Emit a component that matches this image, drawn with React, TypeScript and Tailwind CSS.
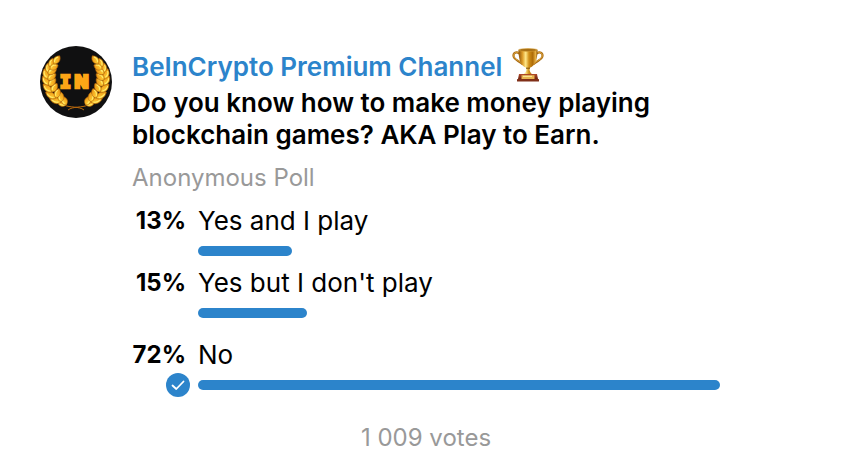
type PollOption = {
  label: string;
  percent: number;
  chosen?: boolean;
};

const OPTIONS: PollOption[] = [
  { label: 'Yes and I play', percent: 13 },
  { label: "Yes but I don't play", percent: 15 },
  { label: 'No', percent: 72, chosen: true },
];

// The leading option fills the whole track, the others scale against it.
const MAX_PERCENT = Math.max(...OPTIONS.map((o) => o.percent));

// Leaves of the left laurel branch, bottom to top: x, y, angle, length
const LEAVES: [number, number, number, number][] = [
  [27, 58, 190, 10], [26, 59, 250, 9],
  [21, 56, 198, 12], [21, 56, 270, 10],
  [16, 52, 210, 12], [16, 52, 288, 10],
  [12, 46, 222, 12], [12, 46, 300, 10],
  [9, 39, 235, 11], [9, 40, 312, 10],
  [8, 33, 250, 11], [8, 34, 322, 10],
  [9, 27, 264, 10], [8, 28, 328, 10],
  [11, 22, 280, 10], [10, 23, 334, 9],
  [14, 18, 305, 10],
];

function Branch() {
  return (
    <g>
      <path d="M44 64C39 60 30 62 24 59C14 54 8 44 8 34C8 26 12 18 19 13" fill="none" stroke="#b9690d" strokeWidth="1" />
      {LEAVES.map(([x, y, angle, length], i) => (
        <g key={i} transform={`translate(${x} ${y}) rotate(${angle}) scale(${length / 10} 1.2)`}>
          <path d="M0 0C2 -3.6 7 -3.6 10 0C7 3.4 2 3 0 0Z" fill="url(#gold)" stroke="#a85b08" strokeWidth="0.5" />
          <path d="M2 -0.7C4 -1.8 6 -1.8 8 -0.6" fill="none" stroke="#ffed70" strokeWidth="0.9" />
        </g>
      ))}
    </g>
  );
}

function Avatar() {
  return (
    <svg viewBox="0 0 72 72" className="size-18 shrink-0" role="img" aria-label="BeInCrypto">
      <defs>
        <linearGradient id="gold" x1="0" y1="0" x2="1" y2="1">
          <stop offset="0" stopColor="#ffdc3f" />
          <stop offset="0.55" stopColor="#f8b325" />
          <stop offset="1" stopColor="#d9830d" />
        </linearGradient>
      </defs>
      <circle cx="36" cy="36" r="36" fill="#101011" />
      <Branch />
      <g transform="translate(72 0) scale(-1 1)">
        <Branch />
      </g>
      <g fill="#fda516" stroke="#fda516" strokeWidth="2.6" fontWeight="700">
        <text x="20" y="42" fontFamily="'DejaVu Sans Mono', monospace" fontSize="18">I</text>
        <text x="34" y="42" fontFamily="'DejaVu Sans', sans-serif" fontSize="18">N</text>
      </g>
    </svg>
  );
}

function Trophy() {
  return (
    <svg viewBox="0 0 32 34" className="mt-0.5 h-[34px] w-8 shrink-0" role="img" aria-label="Trophy">
      <defs>
        <linearGradient id="cup" x1="0" x2="1">
          <stop offset="0" stopColor="#8d5207" />
          <stop offset="0.22" stopColor="#e0a02c" />
          <stop offset="0.38" stopColor="#ffe88a" />
          <stop offset="0.55" stopColor="#d18f17" />
          <stop offset="0.75" stopColor="#ad6b09" />
          <stop offset="0.9" stopColor="#e7b144" />
          <stop offset="1" stopColor="#8b5106" />
        </linearGradient>
        <linearGradient id="base" x1="0" y1="0" x2="0" y2="1">
          <stop offset="0" stopColor="#b34b2b" />
          <stop offset="1" stopColor="#6f2512" />
        </linearGradient>
      </defs>
      <g fill="none" stroke="#a96b14" strokeWidth="2.2">
        <path d="M7.5 5.5C4 3.2 1.2 4.8 1.5 8C1.9 12 7 12.5 11 16.5" />
        <path d="M24.5 5.5C28 3.2 30.8 4.8 30.5 8C30.1 12 25 12.5 21 16.5" />
      </g>
      <g fill="none" stroke="#e2ab40" strokeWidth="0.9">
        <path d="M7.5 5.2C4 3 1.5 4.8 1.8 8C2.2 11.6 7 12.2 11 16" />
        <path d="M24.5 5.2C28 3 30.5 4.8 30.2 8C29.8 11.6 25 12.2 21 16" />
      </g>
      <path d="M6.5 2C6.5 11 8.5 17.5 14 19.8C15 21.4 14.4 24 12 26.2H20C17.6 24 17 21.4 18 19.8C23.5 17.5 25.5 11 25.5 2Z" fill="url(#cup)" />
      <ellipse cx="16" cy="2" rx="9.5" ry="1.4" fill="#a56c12" stroke="#d9a23a" strokeWidth="0.6" />
      <path d="M14 20.2H18" stroke="#805009" strokeWidth="1" />
      <path d="M7 26H25L26 31H6Z" fill="url(#base)" />
      <rect x="5" y="31" width="22" height="2.5" rx="0.5" fill="#803019" />
      <rect x="9.5" y="27.2" width="13" height="3.8" fill="#e8b550" />
      <path d="M11 28.3H20" stroke="#fff0a4" strokeWidth="1" />
    </svg>
  );
}

function CheckBadge() {
  return (
    <svg viewBox="0 0 24 24" className="-mr-1 size-6 shrink-0" role="img" aria-label="Your choice">
      <circle cx="12" cy="12" r="12" fill="#2c84cb" />
      <path d="M6.5 12.5L10.3 16L17.5 8.5" fill="none" stroke="#fff" strokeWidth="1.8" strokeLinecap="round" strokeLinejoin="round" />
    </svg>
  );
}

function OptionRow({ option }: { option: PollOption }) {
  return (
    <li className={`grid grid-cols-[54px_1fr] gap-x-3 ${option.chosen ? 'pt-[10px]' : ''}`}>
      <span className="text-right text-2xl leading-9 font-bold">{option.percent}%</span>
      <span className="text-[26px] leading-9">{option.label}</span>
      <div className="flex h-6 items-center justify-end">{option.chosen && <CheckBadge />}</div>
      <div className="flex h-6 items-center">
        <div
          className="h-[10px] rounded-full bg-[#2c84cb]"
          style={{ width: `${(option.percent / MAX_PERCENT) * 100}%` }}
        />
      </div>
    </li>
  );
}

export default function App() {
  return (
    <main className="flex items-start gap-5 bg-white pt-[46px] pr-32 pl-10 font-['Inter',sans-serif] text-black">
      <Avatar />
      <article className="min-w-0 flex-1">
        <header className="flex h-[41px] items-start gap-[10px]">
          <a href="#" className="text-[26px] leading-[42px] font-semibold text-[#2c84cb]">
            BeInCrypto Premium Channel
          </a>
          <Trophy />
        </header>
        <h1 className="text-[26px] leading-8 font-semibold">
          Do you know how to make money playing blockchain games? AKA Play to Earn.
        </h1>
        <p className="mt-[11px] text-2xl leading-8 text-[#999]">Anonymous Poll</p>
        <ul className="mt-[9px] space-y-0.5">
          {OPTIONS.map((option) => (
            <OptionRow key={option.label} option={option} />
          ))}
        </ul>
        <p className="mt-[25px] text-center text-2xl leading-8 text-[#999]">1 009 votes</p>
      </article>
    </main>
  );
}
